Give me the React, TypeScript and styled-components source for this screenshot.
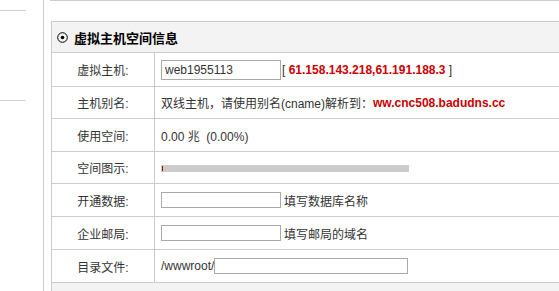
import React from 'react';
import styled, { createGlobalStyle } from 'styled-components';

const GlobalStyle = createGlobalStyle`
  html, body {
    margin: 0;
    padding: 0;
    background: #fff;
    overflow: hidden;
  }
  body {
    font-family: 'Liberation Sans', 'Noto Sans CJK SC', Arial, sans-serif;
    font-size: 12px;
    color: #333;
  }
`;

const Page = styled.div`
  display: flex;
  height: 291px;
`;

const Sidebar = styled.div`
  width: 43px;
  flex-shrink: 0;
  border-right: 1px solid #ccc;
  padding-top: 10px;
`;

const SideItem = styled.div`
  width: 26px;
  height: 90px;
  box-sizing: border-box;
  border-top: 1px solid #d2d2d2;
`;

const Main = styled.div`
  flex: 1;
  min-width: 0;
  padding-left: 6px;
`;

const TopStrip = styled.div`
  border-bottom: 1px solid #ccc;
`;

// the panel runs on past the right edge of the window, so no right border
const Panel = styled.div`
  margin: 20px 0 0 1px;
  border: 1px solid #ccc;
  border-right: none;
  border-bottom: none;
`;

const PanelHeader = styled.div`
  height: 30px;
  display: flex;
  align-items: center;
  gap: 6px;
  padding-left: 5px;
  background: #f3f3f3;
  border-bottom: 1px solid #ccc;
  font-size: 13px;
  font-weight: bold;
  color: #000;
`;

const Row = styled.div<{ $h: number }>`
  display: grid;
  grid-template-columns: 103px 1fr;
  height: ${(p) => p.$h}px;
  box-sizing: border-box;
  border-bottom: 1px solid #ccc;
`;

const Label = styled.div`
  display: flex;
  align-items: center;
  justify-content: center;
  border-right: 1px solid #ccc;
  color: #333;
`;

const Value = styled.div`
  display: flex;
  align-items: center;
  padding-left: 6px;
  white-space: nowrap;
  overflow: hidden;
  color: #333;
`;

const Field = styled.input<{ $w: number; $h: number }>`
  width: ${(p) => p.$w}px;
  height: ${(p) => p.$h}px;
  flex-shrink: 0;
  box-sizing: border-box;
  margin: 0;
  padding: 0 3px;
  border: 1px solid #aaa;
  font-family: 'Liberation Sans', Arial, sans-serif;
  font-size: 12px;
  color: #333;
  outline: none;
`;

const Hint = styled.span`
  margin-left: 3px;
`;

const Red = styled.span`
  color: #cc0000;
  font-weight: bold;
`;

const Bracket = styled.span`
  margin-left: 1px;
`;

const Bar = styled.div`
  width: 248px;
  height: 7px;
  background: #cccccc;
  display: flex;
  align-items: center;
  margin-top: 1px;
`;

const BarFill = styled.div`
  height: 5px;
  margin-left: 1px;
  background: #990000;
`;

const Footer = styled.div`
  height: 20px;
  background: #f3f3f3;
`;

const Dot = () => (
  <svg width="11" height="11" viewBox="0 0 11 11">
    <circle cx="5.5" cy="5.5" r="4.8" fill="none" stroke="#000" strokeWidth="1" />
    <circle cx="5.5" cy="5.5" r="1.8" fill="#000" />
  </svg>
);

const used = 0;

const App: React.FC = () => {
  return (
    <>
      <GlobalStyle />
      <Page>
        <Sidebar>
          <SideItem />
          <SideItem />
        </Sidebar>
        <Main>
          <TopStrip />
          <Panel>
            <PanelHeader>
              <Dot />
              虚拟主机空间信息
            </PanelHeader>
            <Row $h={34}>
              <Label>虚拟主机:</Label>
              <Value>
                <Field $w={120} $h={20} defaultValue="web1955113" />
                <Bracket>[</Bracket>
                <Red>&nbsp;61.158.143.218,61.191.188.3</Red>
                &nbsp;]
              </Value>
            </Row>
            <Row $h={32}>
              <Label>主机别名:</Label>
              <Value>
                双线主机，请使用别名(cname)解析到：<Red>ww.cnc508.badudns.cc</Red>
              </Value>
            </Row>
            <Row $h={33}>
              <Label>使用空间:</Label>
              <Value>0.00 兆&nbsp; (0.00%)</Value>
            </Row>
            <Row $h={32}>
              <Label>空间图示:</Label>
              <Value>
                <Bar>
                  <BarFill style={{ width: Math.max(1, used * 248) }} />
                </Bar>
              </Value>
            </Row>
            <Row $h={33}>
              <Label>开通数据:</Label>
              <Value>
                <Field $w={120} $h={16} />
                <Hint>填写数据库名称</Hint>
              </Value>
            </Row>
            <Row $h={33}>
              <Label>企业邮局:</Label>
              <Value>
                <Field $w={120} $h={16} />
                <Hint>填写邮局的域名</Hint>
              </Value>
            </Row>
            <Row $h={33}>
              <Label>目录文件:</Label>
              <Value>
                /wwwroot/
                <Field $w={194} $h={16} />
              </Value>
            </Row>
            <Footer />
          </Panel>
        </Main>
      </Page>
    </>
  );
};

export default App;
